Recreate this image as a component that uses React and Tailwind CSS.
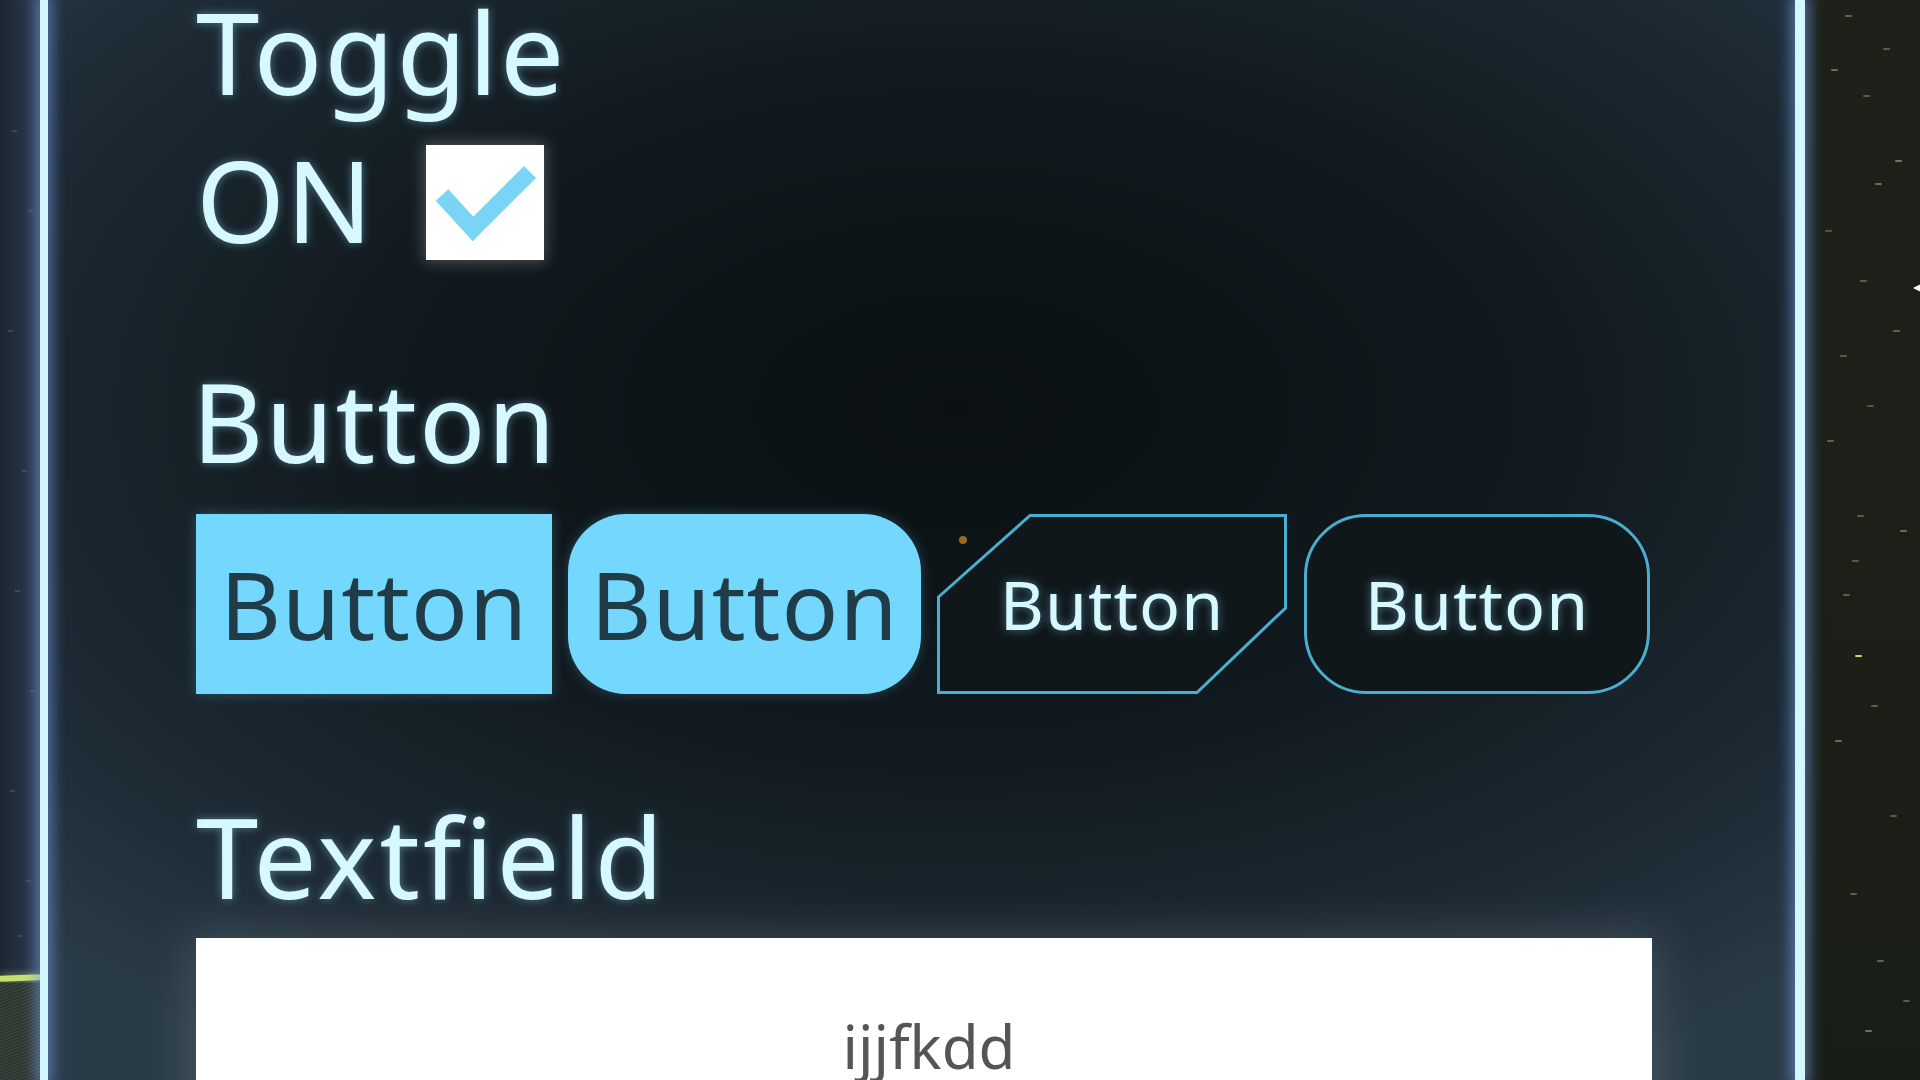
const leftStars = [
  [12, 130], [28, 210], [8, 330], [22, 470], [15, 590], [30, 690], [10, 790], [26, 880], [18, 935],
];

const rightStars = [
  [40, 15, 'bg-[#5f6a3a]'], [78, 48, 'bg-[#59633a]'], [26, 69, 'bg-[#6a7545]'], [58, 95, 'bg-[#555f38]'],
  [90, 160, 'bg-[#6f7a48]'], [70, 183, 'bg-[#6a7545]'], [20, 230, 'bg-[#4f5935]'], [55, 280, 'bg-[#59633a]'],
  [88, 330, 'bg-[#5f6a3a]'], [35, 355, 'bg-[#555f38]'], [62, 405, 'bg-[#4f5935]'], [22, 440, 'bg-[#5f6a3a]'],
  [52, 515, 'bg-[#59633a]'], [95, 530, 'bg-[#6a7545]'], [47, 560, 'bg-[#555f38]'], [38, 594, 'bg-[#59633a]'],
  [50, 655, 'bg-[#c8e060]'], [66, 705, 'bg-[#59633a]'], [30, 740, 'bg-[#6a7545]'], [85, 815, 'bg-[#555f38]'],
  [45, 893, 'bg-[#59633a]'], [72, 960, 'bg-[#5f6a3a]'], [98, 1000, 'bg-[#555f38]'], [60, 1030, 'bg-[#6a7545]'],
];

const heading = 'font-["Noto_Sans",sans-serif] leading-none text-[#d6f8ff] [text-shadow:0_0_10px_rgba(150,225,255,0.45)]';

function CheckBox() {
  return (
    <div className="mt-[3px] ml-[52px] w-[118px] h-[115px] bg-white shadow-[0_0_14px_2px_rgba(255,255,255,0.25)]">
      <svg width="118" height="115" viewBox="0 0 118 115">
        <polyline points="16,50 47,84 104,27" fill="none" stroke="#7ad4f6" strokeWidth="17" strokeLinejoin="miter" />
      </svg>
    </div>
  );
}

function CutButton() {
  return (
    <div className="relative w-[350px] h-[180px] flex items-center justify-center">
      <svg className="absolute inset-0" width="350" height="180" viewBox="0 0 350 180">
        <polygon points="1.5,83 93,1.5 348.5,1.5 348.5,94 260,178.5 1.5,178.5" fill="#0f171b" stroke="#4aaed0" strokeWidth="3" />
      </svg>
      <span className={`relative text-[68px] tracking-[1px] ${heading}`}>Button</span>
    </div>
  );
}

export default function App() {
  return (
    <div className="h-screen w-screen overflow-hidden flex bg-[#1a222b]">
      {/* left outside */}
      <div className="relative w-[40px] shrink-0 bg-[linear-gradient(90deg,#1c2733,#2c3a4c)]">
        {leftStars.map(([x, y], i) => (
          <div key={i} className="absolute w-[5px] h-[2px] bg-[#3a4a5a]" style={{ left: x, top: y }} />
        ))}
        <div className="absolute left-0 top-[975px] w-[40px] h-[6px] bg-[#c8e070] -rotate-2 shadow-[0_0_8px_rgba(200,230,110,0.6)]" />
        <div className="absolute left-0 top-[983px] w-[40px] h-[97px] bg-[repeating-linear-gradient(160deg,#3a4238_0px,#3a4238_1px,#2a3330_2px,#2a3330_3px)]" />
      </div>

      <div className="w-[8px] shrink-0 bg-[#d2f7ff] shadow-[0_0_14px_5px_rgba(120,160,240,0.55)] z-10" />

      {/* panel */}
      <div className="relative w-[1747px] shrink-0 pl-[148px] bg-[radial-gradient(ellipse_75%_70%_at_52%_38%,#0a1013_0%,#111a1f_45%,#1e2c36_80%,#2a3b48_100%)]">
        <div className={`mt-[-6px] text-[114px] tracking-[2px] ${heading}`}>Toggle</div>

        <div className="mt-[34px] flex items-start">
          <span className={`text-[114px] tracking-[1px] ${heading}`}>ON</span>
          <CheckBox />
        </div>

        <div className={`mt-[105px] ml-[-4px] text-[110px] tracking-[2px] ${heading}`}>Button</div>

        <div className="relative mt-[39px] flex items-center">
          <div className="w-[356px] h-[180px] bg-[#74d7fd] flex items-center justify-center shadow-[0_0_12px_rgba(116,215,253,0.25)]">
            <span className='font-["Noto_Sans",sans-serif] leading-none text-[94px] tracking-[1px] text-[#1f3c48]'>Button</span>
          </div>
          <div className="ml-[16px] w-[353px] h-[180px] rounded-[58px] bg-[#74d7fd] flex items-center justify-center shadow-[0_0_12px_rgba(116,215,253,0.25)]">
            <span className='font-["Noto_Sans",sans-serif] leading-none text-[94px] tracking-[1px] text-[#1f3c48]'>Button</span>
          </div>
          <div className="ml-[16px]">
            <CutButton />
          </div>
          <div className="ml-[17px] w-[346px] h-[180px] rounded-[62px] border-[3px] border-[#4aaed0] bg-[#0f171b] flex items-center justify-center">
            <span className={`text-[68px] tracking-[1px] ${heading}`}>Button</span>
          </div>
          <div className="absolute left-[763px] top-[22px] w-[8px] h-[8px] rounded-full bg-[#9a6a1e]" />
        </div>

        <div className={`mt-[106px] text-[112px] tracking-[3px] ${heading}`}>Textfield</div>

        <div className="mt-[26px] w-[1456px] h-[200px] bg-white pt-[78px] text-center shadow-[0_0_40px_8px_rgba(255,255,255,0.12)]">
          <span className='font-["Noto_Sans",sans-serif] leading-none text-[60px] text-[#555555] pl-[10px]'>ijjfkdd</span>
        </div>
      </div>

      <div className="w-[10px] shrink-0 bg-[#d2f7ff] shadow-[0_0_14px_5px_rgba(120,160,240,0.55)] z-10" />

      {/* right outside */}
      <div className="relative flex-1 bg-[linear-gradient(180deg,#1d2119,#1c2018_50%,#191d17)]">
        {rightStars.map(([x, y, c], i) => (
          <div key={i} className={`absolute w-[7px] h-[2px] rounded-full ${c}`} style={{ left: x, top: y }} />
        ))}
        <div className="absolute left-[108px] top-[283px] w-0 h-0 border-y-[5px] border-y-transparent border-r-[10px] border-r-white" />
      </div>
    </div>
  );
}
